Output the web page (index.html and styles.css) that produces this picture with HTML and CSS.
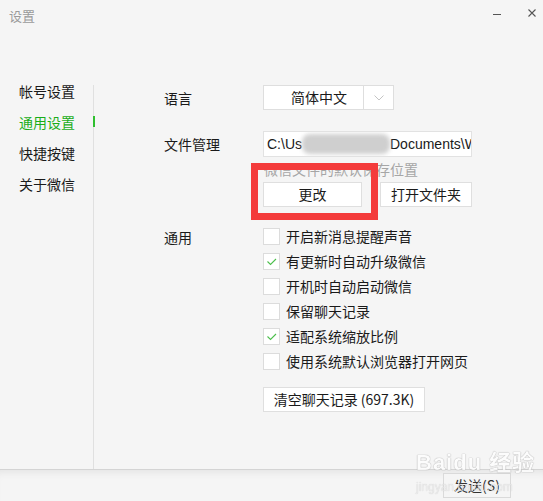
FILE: index.html
```html
<!DOCTYPE html>
<html lang="zh-CN">
<head>
<meta charset="utf-8">
<title>设置</title>
<link rel="stylesheet" href="styles.css">
</head>
<body>
<div class="window">
  <header class="titlebar">
    <span class="title">设置</span>
    <div class="controls">
      <svg class="ctl" width="8" height="8" viewBox="0 0 8 8"><line x1="0" y1="4.5" x2="8" y2="4.5" stroke="#555" stroke-width="1"/></svg>
      <svg class="ctl" width="8" height="8" viewBox="0 0 8 8"><path d="M0.5 0.5 L7.5 7.5 M7.5 0.5 L0.5 7.5" stroke="#555" stroke-width="1.1"/></svg>
    </div>
  </header>
  <div class="main">
    <nav class="sidebar">
      <div class="nav-item">帐号设置</div>
      <div class="nav-item active">通用设置</div>
      <div class="nav-item">快捷按键</div>
      <div class="nav-item">关于微信</div>
    </nav>
    <div class="divider"></div>
    <section class="content">
      <div class="row row-lang">
        <div class="label">语言</div>
        <div class="select">
          <span class="select-text">简体中文</span>
          <span class="select-arrow">
            <svg width="10" height="6" viewBox="0 0 10 6"><path d="M0.5 0.5 L5 5 L9.5 0.5" fill="none" stroke="#c4c4c4" stroke-width="1"/></svg>
          </span>
        </div>
      </div>
      <div class="row row-file">
        <div class="label">文件管理</div>
        <div class="file-col">
          <div class="path">C:\Us<span class="blur"></span>Documents\WeChat Files</div>
          <div class="hint">微信文件的默认保存位置</div>
          <div class="btns">
            <div class="mark-wrap">
              <button class="btn btn-change">更改</button>
              <div class="redbox"></div>
            </div>
            <button class="btn btn-open">打开文件夹</button>
          </div>
        </div>
      </div>
      <div class="row row-general">
        <div class="label">通用</div>
        <div class="general-col">
          <ul class="checks">
            <li><span class="box"></span>开启新消息提醒声音</li>
            <li><span class="box"><svg width="15" height="15" viewBox="0 0 15 15"><path d="M3.5 7.5 L6.5 10.5 L12 5" fill="none" stroke="#4cbf4c" stroke-width="1.1"/></svg></span>有更新时自动升级微信</li>
            <li><span class="box"></span>开机时自动启动微信</li>
            <li><span class="box"></span>保留聊天记录</li>
            <li><span class="box"><svg width="15" height="15" viewBox="0 0 15 15"><path d="M3.5 7.5 L6.5 10.5 L12 5" fill="none" stroke="#4cbf4c" stroke-width="1.1"/></svg></span>适配系统缩放比例</li>
            <li><span class="box"></span>使用系统默认浏览器打开网页</li>
          </ul>
          <button class="btn btn-clear">清空聊天记录 (697.3K)</button>
        </div>
      </div>
    </section>
  </div>
  <footer class="footer">
    <button class="btn btn-send">发送(S)</button>
    <div class="watermark">
      <div class="wm-logo">Bai<span class="paw">du</span> 经验</div>
      <div class="wm-url">jingyan.baidu.com</div>
    </div>
  </footer>
</div>
</body>
</html>
```

FILE: styles.css
```css
* { box-sizing: border-box; }
html, body {
  margin: 0;
  padding: 0;
  background: #f5f5f5;
}
body {
  font-family: "Noto Sans CJK SC", "Liberation Sans", sans-serif;
  font-size: 14px;
  color: #1a1a1a;
  width: 543px;
  height: 501px;
  overflow: hidden;
}
.window {
  display: flex;
  flex-direction: column;
  height: 501px;
}
.titlebar {
  height: 76px;
  flex: none;
  display: flex;
  justify-content: space-between;
  align-items: flex-start;
  padding: 7px 7px 0 9px;
}
.title {
  font-size: 13px;
  line-height: 18px;
  color: #9a9a9a;
}
.controls {
  display: flex;
  gap: 27px;
  padding-top: 2px;
  margin-top: 0;
}
.ctl { display: block; }
.ctl:first-child { margin-top: 1px; }

.main {
  height: 393px;
  flex: none;
  display: flex;
}
.sidebar {
  width: 93px;
  flex: none;
  padding-left: 19px;
}
.nav-item {
  height: 31px;
  line-height: 31px;
  position: relative;
  color: #1a1a1a;
}
.nav-item.active { color: #1aad19; }
.nav-item.active::after {
  content: "";
  position: absolute;
  left: 74px;
  top: 9px;
  width: 2px;
  height: 11px;
  background: #2fbf2f;
}
.divider {
  width: 1px;
  flex: none;
  margin-top: 9px;
  background: #e0e0e0;
}
.content {
  flex: 1;
  padding: 9px 0 0 70px;
}
.row {
  display: grid;
  grid-template-columns: 99px 1fr;
}
.label {
  line-height: 25px;
}
.row-lang { height: 25px; margin-bottom: 21px; }
.row-lang .label { line-height: 27px; }
.select {
  width: 131px;
  height: 25px;
  display: flex;
  background: #fff;
  border: 1px solid #dedede;
}
.select-text {
  width: 100px;
  text-align: center;
  line-height: 23px;
  padding-left: 11px;
  border-right: 1px solid #dedede;
}
.select-arrow {
  flex: 1;
  display: flex;
  align-items: center;
  justify-content: center;
}
.row-file .label { line-height: 26px; }
.path {
  width: 209px;
  height: 26px;
  background: #fff;
  border: 1px solid #e2e2e2;
  font-family: "Liberation Sans", sans-serif;
  font-size: 14px;
  line-height: 24px;
  padding-left: 3px;
  white-space: nowrap;
  overflow: hidden;
}
.blur {
  display: inline-block;
  width: 88px;
  height: 20px;
  vertical-align: middle;
  margin-top: -2px;
  background: #cfcfcf;
  border-radius: 8px;
  filter: blur(2px);
}
.hint {
  margin-top: 3px;
  line-height: 18px;
  color: #a6a6a6;
  padding-left: 1px;
}
.btns {
  margin-top: 4px;
  display: flex;
  gap: 18px;
}
.btn {
  font-family: "Noto Sans CJK SC", "Liberation Sans", sans-serif;
  font-size: 14px;
  color: #1a1a1a;
  background: #fff;
  border: 1px solid #dfdfdf;
  height: 25px;
  padding: 0;
  line-height: 23px;
  display: block;
}
.mark-wrap { position: relative; }
.btn-change { width: 99px; }
.btn-open { width: 92px; }
.redbox {
  position: absolute;
  left: -12px;
  top: -19px;
  right: -16px;
  bottom: -13px;
  border: 7px solid #f43b3b;
  pointer-events: none;
}
.row-general { margin-top: 21px; }
.row-general .label { line-height: 19px; }
.checks {
  list-style: none;
  margin: 0;
  padding: 0;
  display: flex;
  flex-direction: column;
  gap: 8px;
}
.checks li {
  height: 17px;
  display: flex;
  align-items: center;
  gap: 6px;
  line-height: 17px;
  white-space: nowrap;
}
.box {
  width: 17px;
  height: 17px;
  flex: none;
  background: #fff;
  border: 1px solid #dcdcdc;
  display: flex;
  align-items: center;
  justify-content: center;
}
.box svg { display: block; }
.btn-clear {
  margin-top: 17px;
  width: 162px;
}
.footer {
  flex: 1;
  position: relative;
  border-top: 1px solid #d4d4d4;
  box-shadow: inset 0 8px 8px -6px rgba(0,0,0,0.08);
  display: flex;
  justify-content: flex-end;
  align-items: flex-start;
  padding: 3px 32px 0 0;
}
.btn-send {
  width: 68px;
  height: 25px;
  background: #f5f5f5;
  color: #333;
  border-color: #dadada;
}
.watermark {
  position: absolute;
  left: 416px;
  top: -18px;
  color: #fff;
  pointer-events: none;
  opacity: 0.75;
}
.wm-logo {
  font-family: "Liberation Sans", "Noto Sans CJK SC", sans-serif;
  font-size: 22px;
  font-weight: bold;
  line-height: 22px;
  letter-spacing: 1px;
  text-shadow: 0 0 1px #999, 0 0 1px #999;
}
.wm-url {
  font-family: "Liberation Sans", sans-serif;
  font-size: 12px;
  line-height: 14px;
  color: #e8e8e8;
  text-shadow: 0 0 1px #bbb;
  margin-top: 6px;
}
```
